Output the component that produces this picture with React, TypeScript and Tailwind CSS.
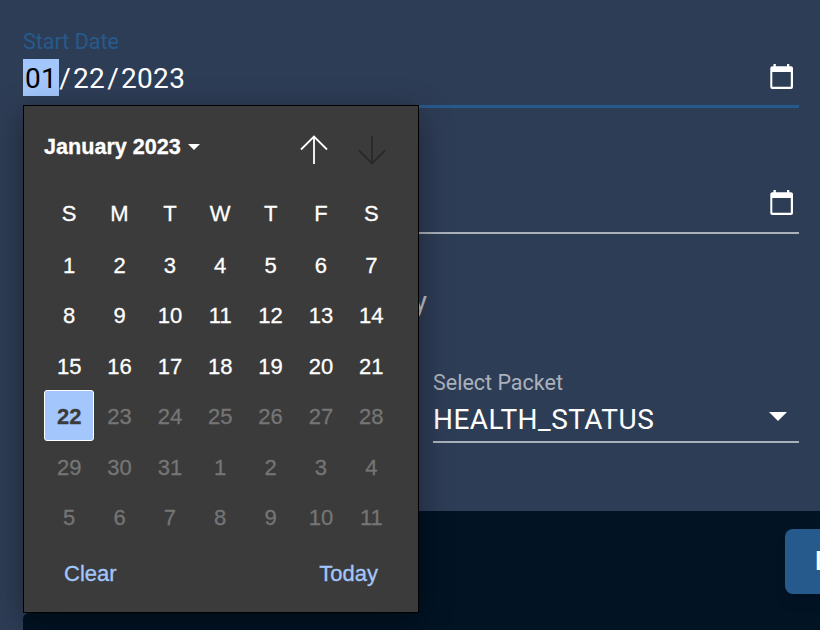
import React from "react";

const weekdays = ["S", "M", "T", "W", "T", "F", "S"];
const days = [
  1, 2, 3, 4, 5, 6, 7, 8, 9, 10, 11, 12, 13, 14, 15, 16, 17, 18, 19, 20, 21, 22,
  23, 24, 25, 26, 27, 28, 29, 30, 31, 1, 2, 3, 4, 5, 6, 7, 8, 9, 10, 11,
];

function CalendarIcon() {
  return (
    <svg width="24" height="26" viewBox="0 0 24 26" className="shrink-0">
      <path
        fill="#fff"
        fillRule="evenodd"
        d="M3.500 0h2.300v2.200h11.200V0h2.300v2.200h1.700a2 2 0 0 1 2 2v18.800a2 2 0 0 1-2 2H2.300a2 2 0 0 1-2-2V4.200a2 2 0 0 1 2-2h1.200zM2.300 8v14.800h18.500V8z"
      />
    </svg>
  );
}

function Arrow({ down = false }: { down?: boolean }) {
  return (
    <svg
      width="28"
      height="30"
      viewBox="0 0 28 30"
      fill="none"
      strokeWidth="1.8"
      className={down ? "rotate-180 stroke-[#292929]" : "stroke-white"}
    >
      <path d="M14 29V1.500M1 14.500L14 1.500l13 13" />
    </svg>
  );
}

function DatePicker() {
  return (
    <div className="absolute left-[23px] top-[105px] flex h-[508px] w-[396px] flex-col border border-black bg-[#3b3b3b] px-5 font-['Liberation_Sans',Arial,sans-serif] text-[22px] text-white shadow-[0_8px_30px_rgba(0,0,0,0.4)] [-webkit-text-stroke:0.3px_currentColor]">
      <div className="flex h-[81px] shrink-0 items-center">
        <div className="flex grow items-center gap-[7px] pt-0.5 text-[21.6px] font-bold">
          <span>January 2023</span>
          <svg width="12" height="6" viewBox="0 0 12 6">
            <path d="M0 0h12L6 6z" fill="#fff" />
          </svg>
        </div>
        <div className="mr-[12.5px] mt-1.5 flex gap-[30px]">
          <Arrow />
          <Arrow down />
        </div>
      </div>
      <div className="grid h-[52px] w-[352.5px] shrink-0 grid-cols-7 items-center text-center">
        {weekdays.map((d, i) => (
          <span key={i}>{d}</span>
        ))}
      </div>
      <div className="grid h-[303px] w-[352.5px] shrink-0 grid-cols-7 grid-rows-6 text-center">
        {days.map((d, i) => (
          <div
            key={i}
            className={
              i === 21
                ? "-mt-px flex items-center justify-center rounded-[3px] border border-white bg-[#a3c7fc] pt-0.5 font-bold text-[#3b3b3b]"
                : i > 21
                  ? "flex items-center justify-center pt-[2px] text-[#757575]"
                  : "flex items-center justify-center pt-[2px]"
            }
          >
            {d}
          </div>
        ))}
      </div>
      <div className="flex grow items-center justify-between px-5 pb-2 text-[#a3c7fc]">
        <span>Clear</span>
        <span>Today</span>
      </div>
    </div>
  );
}

export default function App() {
  return (
    <div className="relative flex h-[630px] w-[820px] flex-col overflow-hidden bg-[#2e3d56] font-[Roboto,sans-serif] text-white">
      <div className="flex h-[511px] shrink-0 flex-col pl-[23px] pr-[21px]">
        <div className="flex h-[108px] flex-col border-b-[3px] border-[#265a8c] pt-[29px]">
          <span className="text-[21.5px] leading-[26px] text-[#265a8c]">Start Date</span>
          <div className="flex h-[44px] items-center justify-between pr-[5px]">
            <div className="flex items-center text-[28px] leading-[37px] tracking-[0.32px]">
              <span className="h-[37px] bg-[#a3c7fc] px-[2px] pt-px text-black">01</span>
              <span className="pt-[2px]">/</span>
              <span className="px-[2px] pt-[2px]">22</span>
              <span className="pt-[2px]">/</span>
              <span className="px-[2px] pt-[2px]">2023</span>
            </div>
            <CalendarIcon />
          </div>
        </div>
        <div className="flex h-[126px] items-end justify-end border-b-2 border-[#abb1bb] pb-4 pr-[5px]">
          <CalendarIcon />
        </div>
        <div className="flex h-[136px] w-[404px] shrink-0 justify-end pt-[50px] text-[28px] leading-[36px] text-[#c0c5cc]">
          y
        </div>
        <div className="ml-[410px] flex h-[73px] shrink-0 flex-col border-b-2 border-[#abb1bb]">
          <span className="text-[21.5px] leading-[26px] text-[#abb1bb]">Select Packet</span>
          <div className="flex h-[45px] items-center justify-between pr-3">
            <span className="pt-[2px] text-[28px] leading-[36px] tracking-[0.48px]">HEALTH_STATUS</span>
            <svg width="18" height="9" viewBox="0 0 18 9" className="mb-[5px]">
              <path d="M0 0h18L9 9z" fill="#fff" />
            </svg>
          </div>
        </div>
      </div>
      <div className="ml-[23px] flex h-[102px] shrink-0 items-start justify-end bg-[#021324]">
        <div className="mt-[18px] flex h-[65px] w-[35px] shrink-0 items-center overflow-hidden rounded-l-[8px] bg-[#265a8c] pl-[30px] text-[25px] font-medium shadow-lg">
          B
        </div>
      </div>
      <div className="ml-[23px] grow rounded-tl-[6px] bg-[#021324]" />
      <DatePicker />
    </div>
  );
}
